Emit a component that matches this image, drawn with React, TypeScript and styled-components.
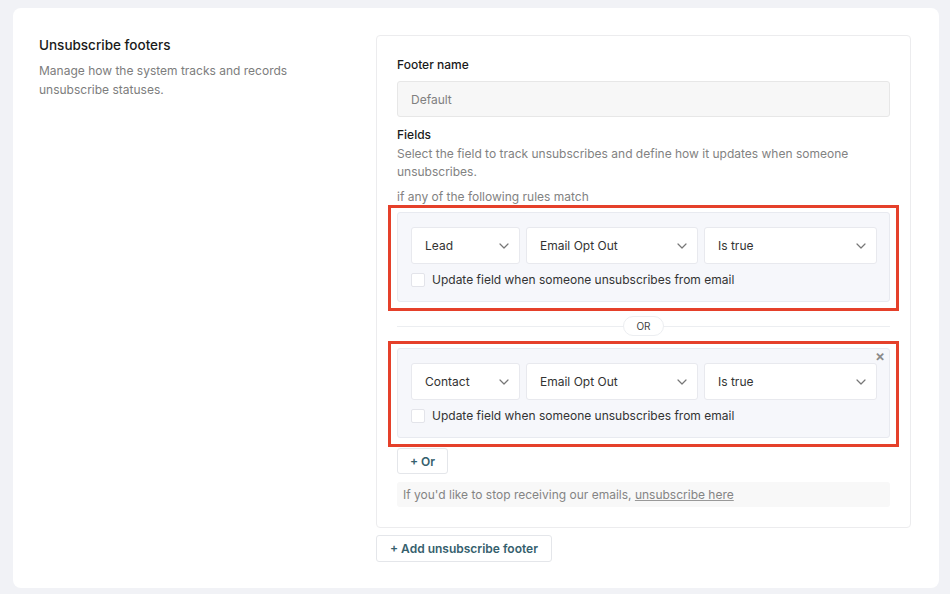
import React from 'react';
import styled, { createGlobalStyle } from 'styled-components';

const GlobalStyle = createGlobalStyle`
  html, body {
    margin: 0;
    padding: 0;
    background: #f1f2f6;
    font-family: Inter, "Liberation Sans", sans-serif;
    color: #1f1f1f;
  }
  * { box-sizing: border-box; }
`;

interface Rule {
  object: string;
  field: string;
  condition: string;
  removable?: boolean;
}

const rules: Rule[] = [
  { object: 'Lead', field: 'Email Opt Out', condition: 'Is true' },
  { object: 'Contact', field: 'Email Opt Out', condition: 'Is true', removable: true },
];

const Chevron = () => (
  <svg width="10" height="6" viewBox="0 0 10 6" fill="none">
    <path d="M1 1l4 4 4-4" stroke="#777" strokeWidth="1.2" strokeLinecap="round" strokeLinejoin="round" />
  </svg>
);

const App: React.FC = () => {
  return (
    <Page>
      <GlobalStyle />
      <Card>
        <Intro>
          <Title>Unsubscribe footers</Title>
          <Description>Manage how the system tracks and records unsubscribe statuses.</Description>
        </Intro>

        <Column>
          <Panel>
            <Label>Footer name</Label>
            <NameInput>Default</NameInput>

            <Label style={{ marginTop: 10 }}>Fields</Label>
            <Help>Select the field to track unsubscribes and define how it updates when someone unsubscribes.</Help>
            <Help $small>if any of the following rules match</Help>

            {rules.map((rule, i) => (
              <React.Fragment key={i}>
                {i > 0 && (
                  <Divider>
                    <OrPill>OR</OrPill>
                  </Divider>
                )}
                <Highlight>
                  <RuleBox>
                    {rule.removable && <Close>×</Close>}
                    <Selects>
                      <Select>
                        <span>{rule.object}</span>
                        <Chevron />
                      </Select>
                      <Select>
                        <span>{rule.field}</span>
                        <Chevron />
                      </Select>
                      <Select>
                        <span>{rule.condition}</span>
                        <Chevron />
                      </Select>
                    </Selects>
                    <CheckRow>
                      <Checkbox />
                      Update field when someone unsubscribes from email
                    </CheckRow>
                  </RuleBox>
                </Highlight>
              </React.Fragment>
            ))}

            <SmallButton>+ Or</SmallButton>

            <Preview>
              If you'd like to stop receiving our emails, <u>unsubscribe here</u>
            </Preview>
          </Panel>

          <AddButton>+ Add unsubscribe footer</AddButton>
        </Column>
      </Card>
    </Page>
  );
};

export default App;

const Page = styled.div`
  padding: 8px 11px 6px 13px;
  min-height: 594px;
`;

const Card = styled.div`
  background: #fff;
  border-radius: 8px;
  height: 580px;
  padding: 27px 27px 0 26px;
  display: grid;
  grid-template-columns: 337px 535px;
`;

const Intro = styled.div`
  padding-top: 0;
`;

const Title = styled.div`
  font-size: 13.5px;
  font-weight: 500;
  color: #1a1a1a;
  line-height: 20px;
`;

const Description = styled.p`
  margin: 6px 0 0;
  font-size: 12px;
  line-height: 19px;
  color: #7d7d7d;
  width: 270px;
`;

const Column = styled.div`
  display: flex;
  flex-direction: column;
  align-items: flex-start;
`;

const Panel = styled.div`
  width: 535px;
  border: 1px solid #ececee;
  border-radius: 4px;
  padding: 21px 20px 20px 20px;
  display: flex;
  flex-direction: column;
`;

const Label = styled.div`
  font-size: 12px;
  font-weight: 500;
  color: #1a1a1a;
  line-height: 16px;
`;

const NameInput = styled.div`
  margin-top: 8px;
  height: 36px;
  background: #f7f7f7;
  border: 1px solid #e7e7e7;
  border-radius: 3px;
  padding: 0 13px;
  display: flex;
  align-items: center;
  font-size: 12px;
  color: #808080;
`;

const Help = styled.div<{ $small?: boolean }>`
  font-size: 12px;
  line-height: 18px;
  color: #828282;
  margin-top: ${p => (p.$small ? '7px' : '2px')};
  margin-bottom: ${p => (p.$small ? '-1px' : '0')};
`;

const Highlight = styled.div`
  margin: 0 -9px;
  border: 3px solid #e5402a;
  padding: 4px 6px 6px;
`;

const RuleBox = styled.div`
  position: relative;
  background: #f6f7fb;
  border: 1px solid #e8eaf0;
  border-radius: 3px;
  padding: 14px 13px 13px 13px;
`;

const Close = styled.span`
  position: absolute;
  top: 0;
  right: 4px;
  font-size: 15px;
  color: #8a8a8a;
  line-height: 14px;
  font-weight: 600;
`;

const Selects = styled.div`
  display: grid;
  grid-template-columns: 109px 172px 173px;
  gap: 6px;
`;

const Select = styled.div`
  height: 37px;
  background: #fff;
  border: 1px solid #e8e9ee;
  border-radius: 3px;
  padding: 0 10px 0 13px;
  display: flex;
  align-items: center;
  justify-content: space-between;
  font-size: 12px;
  color: #333;
`;

const CheckRow = styled.label`
  margin-top: 8px;
  display: flex;
  align-items: center;
  gap: 7px;
  font-size: 12px;
  color: #333;
  line-height: 16px;
`;

const Checkbox = styled.span`
  width: 14px;
  height: 14px;
  border: 1px solid #e3e4ea;
  border-radius: 2px;
  background: #fff;
`;

const Divider = styled.div`
  position: relative;
  height: 30px;
  display: flex;
  align-items: center;
  justify-content: center;

  &::before {
    content: '';
    position: absolute;
    left: 0;
    right: 0;
    top: 50%;
    border-top: 1px solid #eceef1;
  }
`;

const OrPill = styled.span`
  position: relative;
  background: #fff;
  border: 1px solid #eceef1;
  border-radius: 10px;
  padding: 0 12px;
  height: 20px;
  display: flex;
  align-items: center;
  font-size: 10px;
  color: #444;
`;

const SmallButton = styled.button`
  align-self: flex-start;
  margin-top: 1px;
  height: 26px;
  padding: 0 12px;
  background: #fff;
  border: 1px solid #e4e6ea;
  border-radius: 3px;
  font-family: inherit;
  font-size: 12px;
  font-weight: 600;
  color: #35606d;
`;

const Preview = styled.div`
  margin-top: 8px;
  height: 25px;
  background: #f8f8f8;
  border-radius: 3px;
  padding: 0 6px;
  display: flex;
  align-items: center;
  font-size: 12px;
  color: #848484;
  white-space: pre;

  u {
    text-decoration-color: #999;
  }
`;

const AddButton = styled(SmallButton)`
  margin-top: 7px;
  height: 27px;
  padding: 0 13px;
`;
